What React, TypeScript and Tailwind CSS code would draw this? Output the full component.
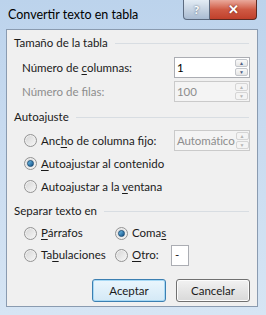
import React from 'react';

const font = { fontFamily: 'Lato, "Open Sans", sans-serif' };

const Radio = ({ checked }: { checked?: boolean }) => (
  <div className="flex h-[13px] w-[13px] shrink-0 items-center justify-center rounded-full border border-[#949494] bg-gradient-to-br from-[#d4d4d4] to-[#f8f8f8] shadow-[inset_0_0_0_1px_#f0f0f0]">
    {checked && (
      <div className="h-[7px] w-[7px] rounded-full border border-[#1c4f78] bg-gradient-to-br from-[#74c6ef] to-[#0e4f86]" />
    )}
  </div>
);

const Spinner = ({ disabled }: { disabled?: boolean }) => (
  <div className="flex w-[15px] shrink-0 flex-col gap-[1px] p-[1px]">
    {['▲', '▼'].map((a) => (
      <div
        key={a}
        className={`flex flex-1 items-center justify-center rounded-[2px] border text-[5px] leading-none ${
          disabled ? 'border-[#d5d5d5] bg-[#f4f4f4] text-[#b5b5b5]' : 'border-[#c3c6cb] bg-gradient-to-b from-[#fafafa] to-[#e5e5e5] text-[#4d6185]'
        }`}
      >
        {a}
      </div>
    ))}
  </div>
);

const SpinBox = ({ value, disabled }: { value: string; disabled?: boolean }) => (
  <div
    className={`flex h-[21px] w-[76px] border ${
      disabled ? 'border-[#cacaca] bg-[#f4f4f4] text-[#8d8d8d]' : 'border-[#abadb3] bg-white text-black'
    }`}
  >
    <div className="flex flex-1 items-center whitespace-nowrap pl-[2px] text-[11.5px] tracking-[-0.1px]">{value}</div>
    <Spinner disabled={disabled} />
  </div>
);

const GroupHeader = ({ label }: { label: string }) => (
  <div className="flex h-[16px] items-center gap-[7px]">
    <span className="text-[11.5px]">{label}</span>
    <div className="mr-[1px] h-0 flex-1 border-t border-[#d8dde2]" />
  </div>
);

const U = ({ children }: { children: React.ReactNode }) => <span className="underline underline-offset-2">{children}</span>;

const Btn = ({ label, primary }: { label: string; primary?: boolean }) => (
  <div
    className={`flex h-[23px] w-[74px] items-center justify-center rounded-[3px] border text-[11.5px] ${
      primary
        ? 'border-[#3c7fb1] bg-gradient-to-b from-[#eaf6fd] to-[#d4e9f6] shadow-[inset_0_0_0_1px_#a7d9f5]'
        : 'border-[#707070] bg-gradient-to-b from-[#f2f2f2] to-[#d9d9d9] shadow-[inset_0_0_0_1px_#fcfcfc]'
    }`}
  >
    {label}
  </div>
);

export default function App() {
  return (
    <div className="h-[315px] w-[266px] overflow-hidden bg-gradient-to-b from-[#bcd3ec] via-[#cadcf0] to-[#d6e5f4] text-[#1a1a1a]" style={font}>
      <div className="flex h-[29px]">
        <div className="flex-1 pl-[8px] pt-[6px] text-[12.5px] text-black">Convertir texto en tabla</div>
        <div className="flex h-[20px] items-start">
          <div className="flex h-[20px] w-[27px] items-center justify-center rounded-bl-[4px] border border-t-0 border-[#5c6b80] bg-gradient-to-b from-[#e3ecf5] via-[#c6d3e2] to-[#a9bbd2] text-[12px] font-bold text-white [text-shadow:0_0_2px_#44546a]">
            ?
          </div>
          <div className="flex h-[20px] w-[47px] items-center justify-center rounded-br-[4px] border border-l-0 border-t-0 border-[#5c2a22] bg-gradient-to-b from-[#e9a99c] via-[#cf5a44] to-[#c0402b] text-[13px] font-bold text-white [text-shadow:0_0_2px_#5a1a10]">
            ✕
          </div>
        </div>
        <div className="w-[9px]" />
      </div>
      <div className="ml-[6px] mr-[8px] flex h-[278px] flex-col border border-[#8a9bb0] bg-[#f0f0f0] px-[7px] pt-[5px]">
        <GroupHeader label="Tamaño de la tabla" />
        <div className="mt-[6px] flex h-[21px] items-center pl-[8px]">
          <span className="flex-1 text-[11.5px]">
            Número de <U>c</U>olumnas:
          </span>
          <SpinBox value="1" />
        </div>
        <div className="mt-[3px] flex h-[21px] items-center pl-[8px]">
          <span className="flex-1 text-[11.5px] text-[#8d8d8d]">Número de filas:</span>
          <SpinBox value="100" disabled />
        </div>
        <div className="mt-[7px]">
          <GroupHeader label="Autoajuste" />
        </div>
        <div className="mt-[4px] flex h-[23px] items-center gap-[4px] pl-[10px]">
          <Radio />
          <span className="flex-1 text-[11.5px]">
            Anc<U>h</U>o de columna fijo:
          </span>
          <SpinBox value="Automático" disabled />
        </div>
        <div className="flex h-[23px] items-center gap-[4px] pl-[10px]">
          <Radio checked />
          <span className="text-[11.5px]">
            <U>A</U>utoajustar al contenido
          </span>
        </div>
        <div className="flex h-[23px] items-center gap-[4px] pl-[10px]">
          <Radio />
          <span className="text-[11.5px]">
            Autoajustar a la <U>v</U>entana
          </span>
        </div>
        <div className="mt-[5px]">
          <GroupHeader label="Separar texto en" />
        </div>
        <div className="mt-[3px] grid h-[22px] grid-cols-[91px_1fr] items-center pl-[10px]">
          <div className="flex items-center gap-[4px]">
            <Radio />
            <span className="text-[11.5px]">
              <U>P</U>árrafos
            </span>
          </div>
          <div className="flex items-center gap-[4px]">
            <Radio checked />
            <span className="text-[11.5px]">
              Coma<U>s</U>
            </span>
          </div>
        </div>
        <div className="grid h-[22px] grid-cols-[91px_1fr] items-center pl-[10px]">
          <div className="flex items-center gap-[4px]">
            <Radio />
            <span className="text-[11.5px]">
              Ta<U>b</U>ulaciones
            </span>
          </div>
          <div className="flex items-center gap-[4px]">
            <Radio />
            <span className="w-[35px] text-[11.5px]">
              <U>O</U>tro:
            </span>
            <div className="flex h-[21px] w-[18px] items-center border border-[#abadb3] bg-white pl-[3px] text-[11.5px]">-</div>
          </div>
        </div>
        <div className="mt-[13px] flex justify-end gap-[10px]">
          <Btn label="Aceptar" primary />
          <Btn label="Cancelar" />
        </div>
      </div>
    </div>
  );
}
